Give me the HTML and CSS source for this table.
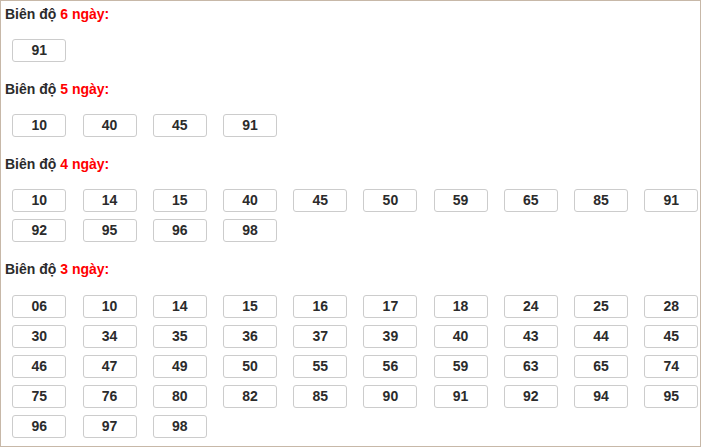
FILE: index.html
```html
<!DOCTYPE html>
<html lang="vi">
<head>
<meta charset="utf-8">
<title>Biên độ</title>
<link rel="stylesheet" href="styles.css">
</head>
<body>
<div class="panel">
  <section class="group">
    <h3 class="title">Biên độ <span class="hl">6 ngày:</span></h3>
    <div class="nums">
      <span class="num">91</span>
    </div>
  </section>
  <section class="group">
    <h3 class="title">Biên độ <span class="hl">5 ngày:</span></h3>
    <div class="nums">
      <span class="num">10</span><span class="num">40</span><span class="num">45</span><span class="num">91</span>
    </div>
  </section>
  <section class="group">
    <h3 class="title">Biên độ <span class="hl">4 ngày:</span></h3>
    <div class="nums">
      <span class="num">10</span><span class="num">14</span><span class="num">15</span><span class="num">40</span><span class="num">45</span><span class="num">50</span><span class="num">59</span><span class="num">65</span><span class="num">85</span><span class="num">91</span>
      <span class="num">92</span><span class="num">95</span><span class="num">96</span><span class="num">98</span>
    </div>
  </section>
  <section class="group">
    <h3 class="title">Biên độ <span class="hl">3 ngày:</span></h3>
    <div class="nums">
      <span class="num">06</span><span class="num">10</span><span class="num">14</span><span class="num">15</span><span class="num">16</span><span class="num">17</span><span class="num">18</span><span class="num">24</span><span class="num">25</span><span class="num">28</span>
      <span class="num">30</span><span class="num">34</span><span class="num">35</span><span class="num">36</span><span class="num">37</span><span class="num">39</span><span class="num">40</span><span class="num">43</span><span class="num">44</span><span class="num">45</span>
      <span class="num">46</span><span class="num">47</span><span class="num">49</span><span class="num">50</span><span class="num">55</span><span class="num">56</span><span class="num">59</span><span class="num">63</span><span class="num">65</span><span class="num">74</span>
      <span class="num">75</span><span class="num">76</span><span class="num">80</span><span class="num">82</span><span class="num">85</span><span class="num">90</span><span class="num">91</span><span class="num">92</span><span class="num">94</span><span class="num">95</span>
      <span class="num">96</span><span class="num">97</span><span class="num">98</span>
    </div>
  </section>
</div>
</body>
</html>
```
FILE: styles.css
```css
html, body {
  margin: 0;
  padding: 0;
  background: #fff;
}
body {
  font-family: "Liberation Sans", Arial, sans-serif;
  color: #333;
}
.panel {
  box-sizing: border-box;
  width: 701px;
  height: 447px;
  border: 1px solid #c7b8a8;
  padding: 3px 0 0 0;
  overflow: hidden;
}
.group {
  margin: 0 0 17px 0;
}
.title {
  margin: 0;
  padding-left: 4px;
  font-size: 14px;
  line-height: 20px;
  font-weight: bold;
  color: #2b2b2b;
}
.hl {
  color: #f00;
}
.nums {
  display: grid;
  grid-template-columns: repeat(10, 54px);
  column-gap: 16.22px;
  row-gap: 7px;
  margin: 15px 0 0 11.3px;
}
.group:last-child .nums {
  margin-top: 16px;
}
.num {
  box-sizing: border-box;
  height: 23px;
  border: 1px solid #ccc;
  border-radius: 3px;
  font-size: 14px;
  font-weight: bold;
  line-height: 21px;
  text-align: center;
  color: #2b2b2b;
}
```
